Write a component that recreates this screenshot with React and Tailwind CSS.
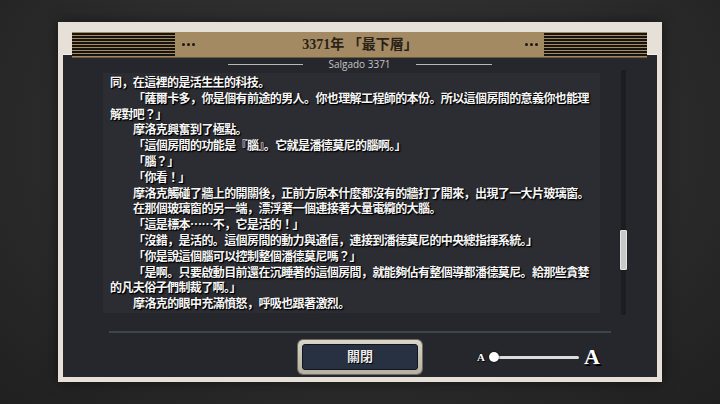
import React from 'react';

const serifFont = "font-['Liberation_Serif','Noto_Sans_CJK_JP',serif]";
const cjkFont = "font-['Noto_Sans_CJK_JP','Noto_Sans_CJK_TC',sans-serif]";

const lines = [
    { text: '同，在這裡的是活生生的科技。', indent: false },
    { text: '「薩爾卡多，你是個有前途的男人。你也理解工程師的本份。所以這個房間的意義你也能理', indent: true },
    { text: '解對吧？」', indent: false },
    { text: '摩洛克興奮到了極點。', indent: true },
    { text: '「這個房間的功能是『腦』。它就是潘德莫尼的腦啊。」', indent: true },
    { text: '「腦？」', indent: true },
    { text: '「你看！」', indent: true },
    { text: '摩洛克觸碰了牆上的開關後，正前方原本什麼都沒有的牆打了開來，出現了一大片玻璃窗。', indent: true },
    { text: '在那個玻璃窗的另一端，漂浮著一個連接著大量電纜的大腦。', indent: true },
    { text: '「這是標本……不，它是活的！」', indent: true },
    { text: '「沒錯，是活的。這個房間的動力與通信，連接到潘德莫尼的中央總指揮系統。」', indent: true },
    { text: '「你是說這個腦可以控制整個潘德莫尼嗎？」', indent: true },
    { text: '「是啊。只要啟動目前還在沉睡著的這個房間，就能夠佔有整個導都潘德莫尼。給那些貪婪', indent: true },
    { text: '的凡夫俗子們制裁了啊。」', indent: false },
    { text: '摩洛克的眼中充滿憤怒，呼吸也跟著激烈。', indent: true },
];

function Stripes() {
    return (
        <div className="h-full w-[103px] bg-[repeating-linear-gradient(to_bottom,#a38a63_0px,#a38a63_1.1px,#17140f_1.1px,#17140f_3px)]" />
    );
}

function Dots() {
    return (
        <div className="flex items-center gap-[2px]">
            <span className="w-[3px] h-[3px] rounded-full bg-[#1b1813]" />
            <span className="w-[3px] h-[3px] rounded-full bg-[#1b1813]" />
            <span className="w-[3px] h-[3px] rounded-full bg-[#1b1813]" />
        </div>
    );
}

function Header() {
    return (
        <div className="relative z-10 ml-[9px] mr-[10px] -mb-[3px] h-[25px] flex items-center bg-[#a38a63] shadow-[0_1px_0_#6b5a40]">
            <Stripes />
            <div className="ml-[7px]"><Dots /></div>
            <div className={`flex-1 text-center text-[14px] font-bold text-[#2a2218] ${serifFont}`}>
                3371年 「最下層」
            </div>
            <div className="mr-[6px]"><Dots /></div>
            <Stripes />
        </div>
    );
}

function TextBox() {
    return (
        <div className={`w-[497px] h-[240px] bg-[#2c2d32] pl-[7px] pt-[1px] overflow-hidden text-[12px] leading-[15.8px] tracking-[-0.6px] font-bold text-[#f6f6f6] [text-shadow:1px_1px_0_#000,1px_1px_2px_#000] ${cjkFont}`}>
            {lines.map((l, i) => (
                <div key={i} className={l.indent ? 'whitespace-nowrap pl-[23px]' : 'whitespace-nowrap'}>
                    {l.text}
                </div>
            ))}
        </div>
    );
}

function Scrollbar() {
    return (
        <div className="relative ml-[21px] -mt-[3px] w-[5px] h-[245px] bg-[#1c1d21] rounded-[1px]">
            <div className="absolute left-[-1px] top-[160px] w-[7px] h-[40px] rounded-[1px] bg-[#c9c9c9] border border-[#e6e6e6] shadow-[0_0_1px_#000]" />
        </div>
    );
}

function FontSlider() {
    return (
        <div className={`flex items-center text-white font-bold [text-shadow:1px_1px_0_#000,0_0_2px_#000] ${serifFont}`}>
            <span className="text-[11px] leading-none">A</span>
            <div className="relative ml-[4px] w-[90px] h-[12px] flex items-center">
                <div className="ml-[5px] flex-1 h-[3px] rounded-full bg-[#dcdcdc]" />
                <div className="absolute left-0 top-[1px] w-[10px] h-[10px] rounded-full bg-white shadow-[0_0_2px_#000]" />
            </div>
            <span className="ml-[5px] text-[22px] leading-none [text-shadow:2px_2px_0_#000]">A</span>
        </div>
    );
}

export default function App() {
    return (
        <div className="w-[720px] h-[404px] overflow-hidden flex justify-center pt-[22px] bg-[#2a2a2a] bg-[radial-gradient(ellipse_at_50%_35%,#353535_0%,#2c2c2c_55%,#202020_100%)]">
            <div className="w-[604px] h-[360px] flex flex-col bg-[#e6e0d8] pt-[10px] px-[5px] pb-[5px] shadow-[0_0_12px_rgba(0,0,0,0.5)]">
                <Header />
                <div className="flex-1 flex flex-col bg-[#26272c] pt-[3px] border-t border-[#f4f0ea]">
                    <div className="h-[12px] flex items-center justify-center gap-[25px] font-['Open_Sans','Noto_Sans',sans-serif] text-[10px] text-[#c4c4c4]">
                        <div className="w-[75px] h-px bg-[#b8b8b8]" />
                        <span className="leading-none">Salgado 3371</span>
                        <div className="w-[76px] h-px bg-[#b8b8b8]" />
                    </div>
                    <div className="mt-[3px] flex items-start pl-[40px]">
                        <TextBox />
                        <Scrollbar />
                    </div>
                    <div className="mt-[16px] ml-[46px] w-[502px] h-[2px] bg-[#3d444c]" />
                    <div className="mt-[7px] flex items-center pl-[235px]">
                        <button className="w-[124px] h-[34px] rounded-[5px] p-[4px] bg-[linear-gradient(to_bottom,#d9d4c6,#b5b0a1)] shadow-[0_0_0_1px_#6f6b60]">
                            <div className={`w-full h-full rounded-[3px] bg-[#283142] border border-[#11151d] flex items-center justify-center text-[13px] font-bold text-[#ececec] [text-shadow:1px_1px_0_#000] ${serifFont}`}>
                                關閉
                            </div>
                        </button>
                        <div className="ml-[55px]">
                            <FontSlider />
                        </div>
                    </div>
                </div>
            </div>
        </div>
    );
}
